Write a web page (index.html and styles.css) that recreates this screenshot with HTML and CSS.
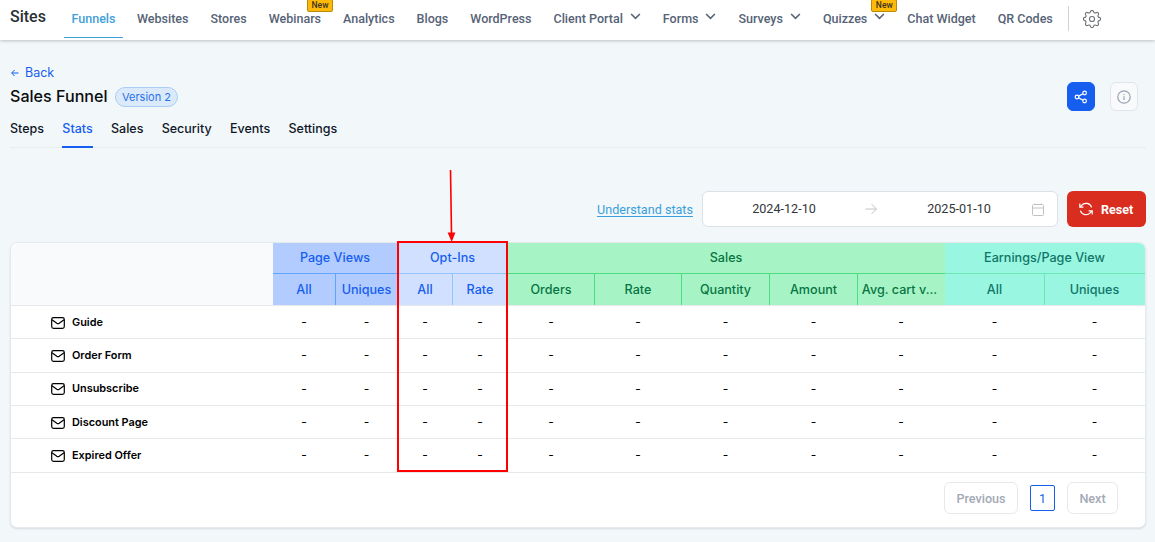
FILE: index.html
```html
<!DOCTYPE html>
<html lang="en">
<head>
    <meta charset="UTF-8">
    <meta name="viewport" content="width=device-width, initial-scale=1.0">
    <title>Sales Funnel - Stats</title>
    <link rel="stylesheet" href="styles.css">
</head>
<body>
    <svg class="sprite">
        <symbol id="chevron" viewBox="0 0 12 8"><path d="M1 1.2l5 5 5-5"/></symbol>
        <symbol id="mail" viewBox="0 0 14 12"><rect x="0.7" y="0.7" width="12.6" height="10.6" rx="1.8"/><path d="M1 2.8l4.8 3.4q1.2.8 2.4 0L13 2.8"/></symbol>
    </svg>

    <header class="topbar">
        <div class="brand">Sites</div>
        <nav class="nav">
            <a class="nav-item active">Funnels</a>
            <a class="nav-item">Websites</a>
            <a class="nav-item">Stores</a>
            <a class="nav-item">Webinars<span class="new-badge">New</span></a>
            <a class="nav-item">Analytics</a>
            <a class="nav-item">Blogs</a>
            <a class="nav-item">WordPress</a>
            <a class="nav-item">Client Portal<svg class="chevron"><use href="#chevron"/></svg></a>
            <a class="nav-item">Forms<svg class="chevron"><use href="#chevron"/></svg></a>
            <a class="nav-item">Surveys<svg class="chevron"><use href="#chevron"/></svg></a>
            <a class="nav-item">Quizzes<svg class="chevron"><use href="#chevron"/></svg><span class="new-badge">New</span></a>
            <a class="nav-item">Chat Widget</a>
            <a class="nav-item">QR Codes</a>
        </nav>
        <div class="nav-settings">
            <svg class="gear" viewBox="0 0 24 24"><path d="M22.34 13.82Q18.65 14.76 20.6 18.02A2 2 0 0 1 18.02 20.6Q14.76 18.65 13.82 22.34A2 2 0 0 1 10.18 22.34Q9.24 18.65 5.98 20.6A2 2 0 0 1 3.4 18.02Q5.35 14.76 1.66 13.82A2 2 0 0 1 1.66 10.18Q5.35 9.24 3.4 5.98A2 2 0 0 1 5.98 3.4Q9.24 5.35 10.18 1.66A2 2 0 0 1 13.82 1.66Q14.76 5.35 18.02 3.4A2 2 0 0 1 20.6 5.98Q18.65 9.24 22.34 10.18A2 2 0 0 1 22.34 13.82z"/><circle cx="12" cy="12" r="3.4"/></svg>
        </div>
    </header>

    <main class="page">
        <a class="back"><svg class="back-arrow" viewBox="0 0 8 8"><path d="M7.5 4H.8M3.6 1L.7 4l2.9 3"/></svg>Back</a>
        <div class="title-row">
            <h1>Sales Funnel</h1>
            <span class="version">Version 2</span>
            <div class="title-actions">
                <button class="icon-btn share"><svg viewBox="0 0 14 14"><circle cx="3" cy="7" r="1.8"/><circle cx="10.6" cy="3" r="1.8"/><circle cx="10.6" cy="11" r="1.8"/><path d="M4.7 6.1l4.3-2.3M4.7 7.9l4.3 2.3"/></svg></button>
                <button class="icon-btn info"><svg viewBox="0 0 14 14"><circle cx="7" cy="7" r="6.2"/><path d="M7 6.3v3.6M7 4v.9"/></svg></button>
            </div>
        </div>

        <div class="tabs">
            <a class="tab">Steps</a>
            <a class="tab active">Stats</a>
            <a class="tab">Sales</a>
            <a class="tab">Security</a>
            <a class="tab">Events</a>
            <a class="tab">Settings</a>
        </div>

        <div class="filters">
            <a class="help-link">Understand stats</a>
            <div class="date-range">
                <span class="date start">2024-12-10</span>
                <svg class="range-arrow" viewBox="0 0 12 12"><path d="M.5 6h10.7M6.5 1l5 5-5 5"/></svg>
                <span class="date end">2025-01-10</span>
                <svg class="calendar" viewBox="0 0 12 13"><rect x="0.5" y="1.5" width="11" height="11" rx="1"/><path d="M.5 5h11M3 .5v1M9 .5v1"/></svg>
            </div>
            <button class="reset">
                <svg viewBox="0 0 14 14"><path d="M.8 1.6v3.6h3.6M13.2 12.4V8.8H9.6M12.6 5.4A5.8 5.8 0 0 0 2.6 3.4L.8 5.2M13.2 8.8l-1.8 1.8a5.8 5.8 0 0 1-10-2"/></svg>
                Reset
            </button>
        </div>

        <section class="card">
            <div class="grid head">
                <div class="corner"></div>
                <div class="group views">Page Views</div>
                <div class="group optins">Opt-Ins</div>
                <div class="group sales">Sales</div>
                <div class="group earnings">Earnings/Page View</div>
                <div class="sub views">All</div>
                <div class="sub views last">Uniques</div>
                <div class="sub optins">All</div>
                <div class="sub optins last">Rate</div>
                <div class="sub sales">Orders</div>
                <div class="sub sales">Rate</div>
                <div class="sub sales">Quantity</div>
                <div class="sub sales">Amount</div>
                <div class="sub sales last">Avg. cart v...</div>
                <div class="sub earnings">All</div>
                <div class="sub earnings last">Uniques</div>
            </div>
            <div class="grid row">
                <div class="name"><svg class="mail"><use href="#mail"/></svg>Guide</div>
                <div>-</div><div>-</div><div>-</div><div>-</div><div>-</div><div>-</div><div>-</div><div>-</div><div>-</div><div>-</div><div>-</div>
            </div>
            <div class="grid row">
                <div class="name"><svg class="mail"><use href="#mail"/></svg>Order Form</div>
                <div>-</div><div>-</div><div>-</div><div>-</div><div>-</div><div>-</div><div>-</div><div>-</div><div>-</div><div>-</div><div>-</div>
            </div>
            <div class="grid row">
                <div class="name"><svg class="mail"><use href="#mail"/></svg>Unsubscribe</div>
                <div>-</div><div>-</div><div>-</div><div>-</div><div>-</div><div>-</div><div>-</div><div>-</div><div>-</div><div>-</div><div>-</div>
            </div>
            <div class="grid row">
                <div class="name"><svg class="mail"><use href="#mail"/></svg>Discount Page</div>
                <div>-</div><div>-</div><div>-</div><div>-</div><div>-</div><div>-</div><div>-</div><div>-</div><div>-</div><div>-</div><div>-</div>
            </div>
            <div class="grid row">
                <div class="name"><svg class="mail"><use href="#mail"/></svg>Expired Offer</div>
                <div>-</div><div>-</div><div>-</div><div>-</div><div>-</div><div>-</div><div>-</div><div>-</div><div>-</div><div>-</div><div>-</div>
            </div>
            <div class="pager">
                <button class="page-btn prev">Previous</button>
                <button class="page-num">1</button>
                <button class="page-btn next">Next</button>
            </div>

            <!-- callout over the Opt-Ins columns -->
            <div class="callout"></div>
            <svg class="callout-arrow" viewBox="0 0 10 73"><path class="shaft" d="M4.5 0l1 64"/><path class="tip" d="M1.6 62.5h7.8L5.7 72z"/></svg>
        </section>
    </main>
</body>
</html>
```
FILE: styles.css
```css
* {
    box-sizing: border-box;
}
body {
    margin: 0;
    height: 542px;
    overflow: hidden;
    background: #f2f7fa;
    font-family: Inter, sans-serif;
    color: #101828;
}
svg {
    fill: none;
    stroke: currentColor;
    flex: none;
}
button {
    font-family: Roboto, sans-serif;
    padding: 0;
}
.sprite {
    display: none;
}

/* top navigation */
.topbar {
    display: flex;
    height: 40px;
    background: #fff;
    box-shadow: 0 1px 3px rgba(0, 0, 0, 0.22);
    font-family: Roboto, sans-serif;
    font-weight: 500;
}
.brand {
    width: 54px;
    padding-left: 10px;
    font-size: 16px;
    line-height: 33px;
    color: #2a3135;
}
.nav {
    display: flex;
    gap: 6px;
    margin-left: 10px;
}
.nav-item {
    position: relative;
    height: 38px;
    padding: 0 8px;
    font-size: 12.52px;
    line-height: 38px;
    color: #566376;
    white-space: nowrap;
}
.nav-item.active {
    padding: 0 7.5px;
    color: #3fa0dc;
    border-bottom: 1px solid #3fa0dc;
}
.chevron {
    width: 11px;
    height: 7px;
    margin-left: 7px;
    margin-bottom: 3px;
    stroke-width: 1.8;
}
.new-badge {
    position: absolute;
    right: -4px;
    top: -1px;
    width: 26px;
    height: 13px;
    border: 1px solid #b98a08;
    border-radius: 2px;
    background: #ffba08;
    color: #3a3420;
    font-size: 8.5px;
    line-height: 11px;
    text-align: center;
}
.nav-settings {
    height: 25px;
    margin: 6px 0 0 7px;
    padding: 4px 0 0 14px;
    border-left: 1px solid #cfd3d6;
    color: #6e7377;
}
.gear {
    display: block;
    width: 18px;
    height: 18px;
    stroke-width: 1.5;
}

/* page heading */
.page {
    padding: 24px 9px 0 10px;
}
.back {
    display: flex;
    align-items: center;
    gap: 6px;
    height: 17px;
    padding-left: 1px;
    font-size: 12.5px;
    color: #155eef;
}
.back-arrow {
    width: 8px;
    height: 8px;
}
.title-row {
    display: flex;
    align-items: center;
    height: 31px;
}
h1 {
    margin: 0 0 2px;
    font-size: 16.1px;
    font-weight: 500;
    color: #0b0c0e;
}
.version {
    height: 20px;
    margin-left: 7px;
    padding: 0 6.5px;
    border: 1px solid #a9cdf5;
    border-radius: 10px;
    background: #dbeafb;
    color: #2970e8;
    font-size: 11px;
    line-height: 18px;
}
.title-actions {
    display: flex;
    gap: 15px;
    margin: 0 8px 0 auto;
}
.icon-btn {
    display: flex;
    align-items: center;
    justify-content: center;
    width: 28px;
    height: 29px;
    border: 1px solid #155eef;
    border-radius: 6px;
}
.icon-btn svg {
    width: 14px;
    height: 14px;
    stroke-width: 1.2;
}
.share {
    background: #155eef;
    color: #fff;
}
.info {
    background: #f9fafb;
    border-color: #e1e5e9;
    color: #98a2b3;
}
.tabs {
    display: flex;
    gap: 18.3px;
    height: 36px;
    border-bottom: 1px solid #e9edf1;
}
.tab {
    height: 36px;
    font-size: 12.5px;
    font-weight: 500;
    line-height: 33px;
}
.tab.active {
    color: #155eef;
    border-bottom: 2px solid #155eef;
}

/* filters */
.filters {
    display: flex;
    align-items: center;
    justify-content: flex-end;
    gap: 9px;
    height: 36px;
    margin-top: 43px;
    font-family: Roboto, sans-serif;
}
.help-link {
    font-size: 12.6px;
    color: #3a9fdd;
    text-decoration: underline;
    text-underline-offset: 2px;
}
.date-range {
    display: flex;
    align-items: center;
    width: 356px;
    height: 36px;
    padding-right: 13px;
    border: 1px solid #dde0e6;
    border-radius: 6px;
    background: #fff;
    font-size: 12.6px;
    color: #333639;
}
.date {
    margin-bottom: 1px;
    text-align: center;
}
.date.start {
    width: 162px;
}
.date.end {
    width: 140px;
    margin-left: 12px;
}
.range-arrow {
    width: 12px;
    height: 12px;
    color: #c2c2c2;
}
.calendar {
    width: 12px;
    height: 13px;
    margin-left: auto;
    color: #c2c2c2;
}
.reset {
    display: flex;
    align-items: center;
    gap: 8px;
    width: 79px;
    height: 36px;
    padding-left: 12px;
    border: 0;
    border-radius: 6px;
    background: #d92d20;
    color: #fff;
    font-size: 12.5px;
    font-weight: 700;
}
.reset svg {
    width: 14px;
    height: 14px;
    stroke-width: 1.2;
}

/* stats table */
.card {
    position: relative;
    height: 286px;
    margin-top: 15px;
    border: 1px solid #e6e9ee;
    border-radius: 7px;
    background: #fff;
    box-shadow: 0 1px 2px rgba(16, 24, 40, 0.12);
}
.grid {
    display: grid;
    grid-template-columns: 262px 63px 62px 55px 55px 87px 87px 88px 88px 87px 100px 100px;
    text-align: center;
    border-bottom: 1px solid #e7e8ec;
}
.head {
    grid-template-rows: 31px 31px;
    overflow: hidden;
    border-radius: 6px 6px 0 0;
    font-size: 12.6px;
    font-weight: 500;
}
.corner {
    grid-row: span 2;
    background: #f9fafb;
}
.group {
    grid-column: span 2;
    padding-right: 1px;
    border-bottom: 1px solid;
    line-height: 30px;
}
.group.sales {
    grid-column: span 5;
}
.sub {
    border-right: 1px solid;
    line-height: 32px;
    white-space: nowrap;
}
.sub.last {
    padding-right: 1px;
    border-right: 0;
}
.sub.sales.last {
    padding-right: 4px;
}
.views {
    background: #b2ccff;
    border-color: #60a5fa;
    color: #155eef;
}
.optins {
    background: #d1e0ff;
    border-color: #93c5fd;
    color: #155eef;
}
.sales {
    background: #a6f4c5;
    border-color: #4ade80;
    color: #087443;
}
.earnings {
    background: #99f6e0;
    border-color: #6ee7b7;
    color: #107569;
}
.row {
    height: 33.37px;
    font-size: 12px;
    line-height: 31px;
    color: #000;
}
.row > div {
    padding-right: 1px;
}
.row .name {
    display: flex;
    align-items: center;
    gap: 7px;
    padding-left: 40px;
    font-size: 10.9px;
    font-weight: 600;
    line-height: 30px;
    height: 31px;
}
.mail {
    width: 14px;
    height: 12px;
    margin-top: 2px;
    stroke-width: 1.2;
}
.pager {
    display: flex;
    align-items: center;
    justify-content: flex-end;
    gap: 12px;
    height: 51px;
    padding-right: 27px;
}
.page-btn {
    height: 32px;
    border: 1px solid #e6e8eb;
    border-radius: 6px;
    background: #fff;
    color: #a3a9b5;
    font-size: 12.6px;
    font-weight: 500;
}
.prev {
    width: 74px;
}
.next {
    width: 51px;
}
.page-num {
    width: 25px;
    height: 26px;
    border: 1px solid #155eef;
    border-radius: 2px;
    background: #fff;
    color: #155eef;
    font-size: 12.5px;
}

.callout {
    position: absolute;
    left: 386px;
    top: -2px;
    width: 111px;
    height: 231px;
    border: 2px solid #f00;
}
.callout-arrow {
    position: absolute;
    left: 435px;
    top: -73px;
    width: 10px;
    height: 73px;
}
.shaft {
    stroke: #f00;
    stroke-width: 1.6;
}
.tip {
    fill: #f00;
    stroke: none;
}
```
